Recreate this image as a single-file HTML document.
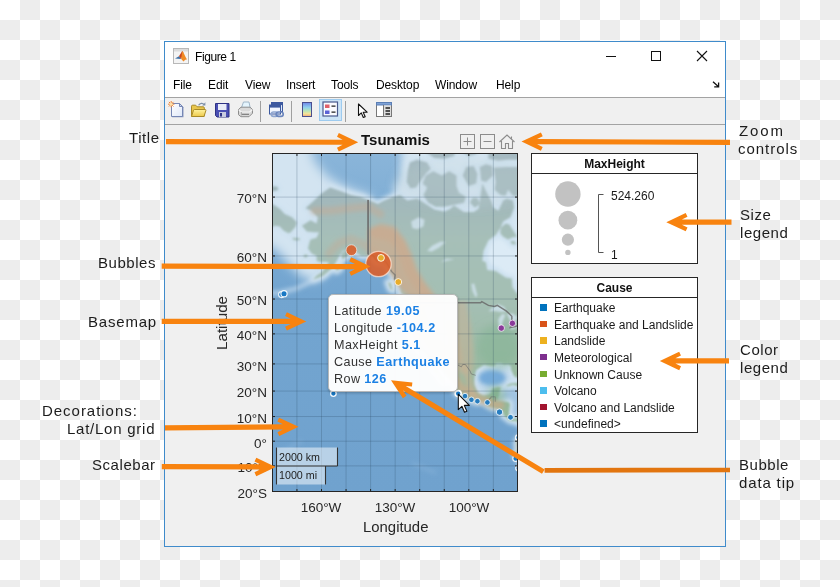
<!DOCTYPE html>
<html>
<head>
<meta charset="utf-8">
<title>Figure 1</title>
<style>
*{box-sizing:border-box;margin:0;padding:0}
html,body{width:840px;height:587px;overflow:hidden}
body{
  position:relative;
  font-family:"Liberation Sans",sans-serif;
  color:#222;
  background:conic-gradient(#ededed 25%,#fff 0 50%,#ededed 0 75%,#fff 0) 0 0/40px 40px;
}
.t{position:absolute;white-space:nowrap;line-height:1}
.t,.lab,.menu,.yt,.xt,.bt,.leg,.tip{will-change:transform}
#win{position:absolute;left:164px;top:41px;width:562px;height:506px;background:#f0f0f0;border:1px solid #3f8bcb}
#titlebar{position:absolute;left:165px;top:42px;width:560px;height:55px;background:#fff}
.hl{position:absolute;left:165px;width:560px;height:1px;background:#a3a3a3}
.menu{position:absolute;top:78px;letter-spacing:-.12px;font-size:12px;line-height:14px;color:#000;white-space:nowrap}
.lab{position:absolute;font-size:15px;line-height:18px;color:#1c1c1c;white-space:nowrap;letter-spacing:.55px}
.yt{position:absolute;width:60px;left:207px;text-align:right;font-size:13.5px;line-height:14px;color:#262626;white-space:nowrap}
.xt{position:absolute;width:60px;text-align:center;top:500.6px;font-size:13.5px;line-height:14px;color:#262626;white-space:nowrap}
.box{position:absolute;background:#fff;border:1px solid #262626}
.bt{position:absolute;font-weight:bold;font-size:12px;line-height:14px;color:#111;text-align:center;white-space:nowrap}
.leg{position:absolute;left:554px;font-size:12px;line-height:14px;color:#1a1a1a;white-space:nowrap}
.sq{position:absolute;left:540.2px;width:6.5px;height:6.5px}
.tip{position:absolute;left:334px;font-size:12.6px;line-height:15px;color:#333;white-space:nowrap;letter-spacing:.4px}
.tip b{color:#1b80e4;letter-spacing:.52px}
.sep{position:absolute;top:101px;width:1px;height:21px;background:#a0a0a0}
</style>
</head>
<body>

<!-- outside annotation labels -->
<div class="lab" style="left:129px;top:129px">Title</div>
<div class="lab" style="left:98px;top:254px">Bubbles</div>
<div class="lab" style="left:88px;top:312.5px;letter-spacing:.8px">Basemap</div>
<div class="lab" style="left:42px;top:402px;letter-spacing:.97px">Decorations:</div>
<div class="lab" style="left:67px;top:420px;letter-spacing:.75px">Lat/Lon grid</div>
<div class="lab" style="left:92px;top:456px">Scalebar</div>
<div class="lab" style="left:738.5px;top:122px;letter-spacing:1.9px">Zoom</div>
<div class="lab" style="left:738px;top:140px;letter-spacing:.96px">controls</div>
<div class="lab" style="left:740px;top:206px">Size</div>
<div class="lab" style="left:740px;top:224px">legend</div>
<div class="lab" style="left:740px;top:341px">Color</div>
<div class="lab" style="left:740px;top:359px">legend</div>
<div class="lab" style="left:739px;top:456px">Bubble</div>
<div class="lab" style="left:739px;top:474px;letter-spacing:.85px">data tip</div>

<!-- window chrome -->
<div id="win"></div>
<div id="titlebar"></div>
<div class="hl" style="top:97px"></div>
<div class="hl" style="top:124px"></div>
<div class="t" style="left:194.5px;top:50.3px;font-size:12px;line-height:14px;color:#000;letter-spacing:-.42px">Figure 1</div>
<div class="menu" style="left:173px">File</div>
<div class="menu" style="left:208px">Edit</div>
<div class="menu" style="left:245px">View</div>
<div class="menu" style="left:286px">Insert</div>
<div class="menu" style="left:331px">Tools</div>
<div class="menu" style="left:376px">Desktop</div>
<div class="menu" style="left:435px">Window</div>
<div class="menu" style="left:496px">Help</div>
<!-- caption buttons -->
<svg class="t" style="left:600px;top:41px" width="125" height="30" viewBox="0 0 125 30">
  <path d="M6 15.5h10" stroke="#111" stroke-width="1" fill="none"/>
  <rect x="51.5" y="10.5" width="9" height="9" stroke="#111" stroke-width="1" fill="none"/>
  <path d="M97 10l10 10M107 10l-10 10" stroke="#111" stroke-width="1.1" fill="none"/>
</svg>
<!-- dock arrow -->
<svg class="t" style="left:712px;top:81px" width="8" height="7" viewBox="0 0 8 7">
  <path d="M1 .8l5 4.4M6.6 1.6v4.2H2.2" stroke="#111" stroke-width="1.3" fill="none"/>
</svg>

<!-- title icon (matlab) -->
<svg class="t" style="left:173px;top:48px" width="16" height="16" viewBox="0 0 16 16">
  <rect x="0.5" y="0.5" width="15" height="15" fill="#f4f4f4" stroke="#b8b8b8"/>
  <rect x="1" y="1" width="14" height="2.5" fill="#dcdcdc"/>
  <path d="M2 10.5l4-2.2 2.2 2.6z" fill="#3b6ea5"/>
  <path d="M6 8.3l3.2-5.3 1.2 1.5-2.2 6.4z" fill="#c8441f"/>
  <path d="M9.2 3c1.6 1.6 3 5.6 4.8 8.6-1.6-.6-2.6.8-3.6 2-0.6-1.2-1.4-2-2.2-2.7z" fill="#f08a24"/>
</svg>
<!-- new -->
<svg class="t" style="left:168px;top:101px" width="17" height="17" viewBox="0 0 17 17">
  <defs><linearGradient id="pg" x1="0" y1="0" x2="1" y2="1"><stop offset="0" stop-color="#ffffff"/><stop offset="1" stop-color="#dfe8f8"/></linearGradient></defs>
  <path d="M4.2 3.2h8.3l3 3v10h-11.3z" fill="#8a97bd"/>
  <path d="M3.5 2.5h8l3 3v10h-11z" fill="url(#pg)" stroke="#7586b4" stroke-width="1"/>
  <path d="M11.5 2.5v3h3z" fill="#cfd9ee" stroke="#7586b4" stroke-width="1" stroke-linejoin="round"/>
  <path d="M3.2 0v6.4M0 3.2h6.4M.9.9l4.6 4.6M5.5.9L.9 5.5" stroke="#ee8436" stroke-width="1"/>
  <circle cx="3.2" cy="3.2" r="1.5" fill="#ffe0a8"/>
</svg>
<!-- open -->
<svg class="t" style="left:190px;top:101px" width="17" height="17" viewBox="0 0 17 17">
  <defs><linearGradient id="fg" x1="0" y1="0" x2="0" y2="1"><stop offset="0" stop-color="#fff3a0"/><stop offset="1" stop-color="#edc94a"/></linearGradient></defs>
  <path d="M1.5 5.2c0-.6.4-1 1-1h3.2l1.4 1.6h6.2c.6 0 1 .4 1 1v8.4h-12.8z" fill="#e9c64c" stroke="#a88a28"/>
  <path d="M1.5 15.5l2-6.3c.2-.5.5-.7 1-.7h10.700c.6 0 .9.400.7 1l-1.900 6z" fill="url(#fg)" stroke="#a88a28"/>
  <path d="M8.6 4.300c1.400-2.400 4.200-2.600 5.600-.7" fill="none" stroke="#7d8fa8" stroke-width="1.200"/>
  <path d="M15.400 1.300v3.300h-3.200z" fill="#7d8fa8"/>
</svg>
<!-- save -->
<svg class="t" style="left:214px;top:102px" width="17" height="16" viewBox="0 0 17 16">
  <path d="M1.5 1.5h13.5v13.5h-12l-1.5-1.5z" fill="#4a4fb3" stroke="#2e3284"/>
  <rect x="4" y="2" width="8.5" height="6" fill="#e9ecf8"/>
  <rect x="5" y="10" width="7" height="5" fill="#c9ccdf"/>
  <rect x="6" y="11" width="2" height="3.5" fill="#2e3284"/>
</svg>
<!-- print -->
<svg class="t" style="left:237px;top:101px" width="17" height="17" viewBox="0 0 17 17">
  <path d="M4.200 7.500l2.300-6.500h5.500l1.300 6.500z" fill="#e4f4fd" stroke="#9fb6c8"/>
  <path d="M1.500 8.500l2.500-2.300h9l2.500 2.300v3.700l-3.500 3.500h-8l-2.500-2z" fill="#d9d9d9" stroke="#8c8c8c"/>
  <path d="M1.800 9l2.600 2h8.200l2.700-2.300" fill="none" stroke="#f6f6f6" stroke-width="1.200"/>
  <path d="M4.500 13.300h7.500" stroke="#6e6e6e"/>
  <path d="M4.400 11v3.500" stroke="#a8a8a8"/>
</svg>
<div class="sep" style="left:260px"></div>
<!-- link / print preview -->
<svg class="t" style="left:267px;top:101px" width="18" height="17" viewBox="0 0 18 17">
  <rect x="4.500" y="1.500" width="11" height="9" fill="#dfe8fa" stroke="#3c599f"/>
  <rect x="4.500" y="1.500" width="11" height="2.600" fill="#3c599f"/>
  <rect x="2.500" y="4" width="11" height="9" fill="#f2f6ff" stroke="#3c599f"/>
  <rect x="2.500" y="4" width="11" height="2.600" fill="#3c599f"/>
  <rect x="4.300" y="11" width="6.500" height="4.400" rx="2.200" fill="none" stroke="#8fa6cf" stroke-width="1.700"/>
  <rect x="9.200" y="11" width="7" height="4.400" rx="2.200" fill="none" stroke="#6b86bd" stroke-width="1.700"/>
</svg>
<div class="sep" style="left:291px"></div>
<!-- colorbar -->
<svg class="t" style="left:301px;top:101px" width="12" height="17" viewBox="0 0 12 17">
  <defs><linearGradient id="cb" x1="0" y1="0" x2="0" y2="1">
    <stop offset="0" stop-color="#6f86e8"/><stop offset=".35" stop-color="#8fd0ee"/><stop offset=".6" stop-color="#b8e6b8"/><stop offset=".8" stop-color="#f4e49a"/><stop offset="1" stop-color="#f2a878"/></linearGradient></defs>
  <rect x="1.5" y="1.5" width="9" height="14" fill="url(#cb)" stroke="#4a4f8e"/>
</svg>
<!-- legend (active) -->
<div class="t" style="left:319px;top:99px;width:23px;height:22px;background:#cce4f7;border:1px solid #9dcbef"></div>
<svg class="t" style="left:322px;top:101px" width="17" height="17" viewBox="0 0 17 17">
  <rect x="1" y="1" width="14.5" height="14" fill="#fbfbff" stroke="#4a5a8e" stroke-width="1.2"/>
  <rect x="3" y="3.5" width="4.5" height="3.5" fill="#e0606a"/>
  <rect x="3" y="9.5" width="4.5" height="3.5" fill="#5b62d6"/>
  <path d="M9.5 5.2h4M9.5 11.2h4" stroke="#222" stroke-width="1.2"/>
</svg>
<div class="sep" style="left:345px"></div>
<!-- pointer -->
<svg class="t" style="left:357px;top:103px" width="12" height="16" viewBox="0 0 12 16">
  <path d="M1.5 1v11.5l2.8-2.6 2 4.6 1.9-.8-2-4.5h3.9z" fill="#fff" stroke="#111" stroke-width="1.1" stroke-linejoin="round"/>
</svg>
<!-- property panel -->
<svg class="t" style="left:375px;top:101px" width="18" height="17" viewBox="0 0 18 17">
  <rect x="1.5" y="1.5" width="15" height="14" fill="#fff" stroke="#777"/>
  <rect x="1.5" y="1.5" width="15" height="2.5" fill="#7ea2d6" stroke="#5b7fb6"/>
  <rect x="9" y="4.5" width="7" height="10.5" fill="#dcdcdc"/>
  <path d="M8.5 4v11.5" stroke="#777"/>
  <path d="M10.5 7h4.5M10.5 10h4.5M10.5 13h4.5" stroke="#222" stroke-width="1.3"/>
</svg>
<!-- figure -->
<div class="t" style="left:361px;top:132.4px;font-size:15px;line-height:16px;font-weight:bold;color:#111">Tsunamis</div>
<svg class="t" style="left:459px;top:133px" width="58" height="17" viewBox="0 0 58 17">
  <g fill="none" stroke="#8c8c8c" stroke-width="1">
   <rect x="1.5" y="1.5" width="14" height="14"/><path d="M4.5 8.5h8M8.5 4.5v8"/>
   <rect x="21.5" y="1.5" width="14" height="14"/><path d="M24.5 8.5h8"/>
   <path d="M40.5 9l7.5-7 7.5 7M42.5 8v7.5h4v-5h3v5h4V8M52.5 3.5v2" stroke-width="1.1"/>
  </g></svg>
<div class="yt" style="top:191.9px">70°N</div>
<div class="yt" style="top:251.0px">60°N</div>
<div class="yt" style="top:294.3px">50°N</div>
<div class="yt" style="top:329.4px">40°N</div>
<div class="yt" style="top:359.5px">30°N</div>
<div class="yt" style="top:386.0px">20°N</div>
<div class="yt" style="top:412.0px">10°N</div>
<div class="yt" style="top:437.0px">0°</div>
<div class="yt" style="top:461.2px">10°S</div>
<div class="yt" style="top:487.0px">20°S</div>
<div class="xt" style="left:290.8px">160°W</div>
<div class="xt" style="left:365.0px">130°W</div>
<div class="xt" style="left:439.4px">100°W</div>
<div class="t" style="left:362.8px;top:518.7px;font-size:14.9px;line-height:16px;color:#262626">Longitude</div>
<div class="t" style="left:222.1px;top:323.1px;font-size:15.2px;line-height:16px;color:#262626;transform:translate(-50%,-50%) rotate(-90deg)">Latitude</div>

<svg class="t" style="left:272px;top:153px" width="246" height="339" viewBox="0 0 246 339">
 <defs>
  <filter id="b1" x="-20%" y="-20%" width="140%" height="140%"><feGaussianBlur stdDeviation="1.0"/></filter>
  <filter id="b2" x="-20%" y="-20%" width="140%" height="140%"><feGaussianBlur stdDeviation="2.2"/></filter>
  <filter id="b3" x="-20%" y="-20%" width="140%" height="140%"><feGaussianBlur stdDeviation="4"/></filter>
  <filter id="b4" x="-30%" y="-30%" width="160%" height="160%"><feGaussianBlur stdDeviation="5.5"/></filter>
  <filter id="b5" x="-30%" y="-30%" width="160%" height="160%"><feGaussianBlur stdDeviation="7"/></filter>
  <linearGradient id="oc" x1="0" y1="0" x2="0" y2="1"><stop offset="0" stop-color="#8ab5d9"/><stop offset=".2" stop-color="#7dacd4"/><stop offset=".4" stop-color="#73a5d0"/><stop offset="1" stop-color="#70a2ce"/></linearGradient>
  <linearGradient id="lg" gradientUnits="userSpaceOnUse" x1="0" y1="0" x2="0" y2="339"><stop offset="0" stop-color="#a0b5bd"/><stop offset=".14" stop-color="#a2b8bb"/><stop offset=".25" stop-color="#a6bfb8"/><stop offset=".45" stop-color="#a4bfb3"/><stop offset=".6" stop-color="#9cbba6"/><stop offset=".8" stop-color="#93b898"/><stop offset="1" stop-color="#a0b494"/></linearGradient>
  <clipPath id="cl"><rect x="0" y="0" width="246" height="339"/></clipPath>
 </defs>
 <g clip-path="url(#cl)">
  <rect x="0" y="0" width="246" height="339" fill="url(#oc)"/>
  <!-- shelves -->
  <path d="M-36.4 -47.6 L27.4 -47.6 L42.1 7.7 L54.4 22.5 L69.1 32.1 L83.9 38.2 L98.6 42.7 L98.6 70.4 L49.5 103.0 L56.9 114.8 L42.1 128.8 L29.9 123.7 L17.6 112.5 L5.3 98.0 L-4.5 92.8 L-36.4 92.8 Z" fill="#d3e4f1" filter="url(#b4)"/>
  <g filter="url(#b3)" fill="#d3e4f1">
   <path d="M130.5 -17.3 L128.1 25.0 L120.7 36.7 L128.1 51.1 L196.8 70.4 L255.7 70.4 L255.7 -17.3 Z" fill="#d6e6f2"/>
   <path d="M209.1 70.4 L255.7 70.4 L255.7 142.2 L241.0 140.2 L221.4 121.5 L209.1 112.5 Z" fill="#dcebf6"/>
  </g>
  <g filter="url(#b2)">
   <path d="M29.9 72.8 L38.5 67.3 L44.6 70.4 L45.8 64.2 L39.7 57.8 L33.5 55.2 L42.1 47.6 L49.5 40.5 L58.1 34.5 L69.1 38.2 L79.0 41.9 L88.8 44.1 L96.1 46.9 L106.0 51.1 L110.9 48.3 L120.7 44.1 L128.1 41.9 L135.4 47.6 L145.2 45.5 L155.1 51.8 L162.4 56.5 L172.2 58.5 L177.2 56.5 L182.1 52.5 L191.9 59.1 L201.7 59.1 L206.6 55.8 L207.8 47.6 L210.3 30.6 L215.2 40.5 L218.9 47.6 L221.4 54.5 L226.3 57.8 L231.2 47.6 L234.9 45.5 L241.0 47.6 L242.2 54.5 L238.5 64.2 L231.2 68.6 L228.7 74.5 L223.8 82.0 L216.4 87.5 L211.5 98.0 L210.3 107.8 L214.0 109.2 L215.2 117.1 L223.8 118.0 L233.6 124.6 L239.8 125.4 L240.5 134.2 L244.7 140.2 L248.4 140.2 L249.6 136.2 L248.4 130.1 L255.7 121.5 L260.6 112.5 L270.5 112.5 L270.5 224.8 L245.9 224.2 L244.9 224.5 L243.0 224.0 L241.5 222.1 L239.0 216.5 L239.0 213.2 L236.1 210.9 L232.4 211.8 L228.7 209.8 L223.8 210.1 L222.6 213.2 L218.9 212.9 L212.0 211.8 L209.1 213.8 L204.2 217.1 L202.9 222.1 L202.2 227.5 L202.2 231.5 L203.7 235.5 L205.9 239.9 L209.1 241.7 L211.5 242.7 L216.4 241.7 L218.9 240.7 L220.1 236.0 L221.4 234.9 L226.3 233.9 L228.7 234.1 L227.5 239.4 L226.3 243.3 L225.0 247.1 L224.3 248.7 L227.5 248.7 L231.2 248.7 L236.1 248.9 L238.0 250.9 L237.3 256.0 L236.8 261.0 L238.5 263.5 L241.0 266.0 L245.9 265.5 L247.1 264.8 L253.3 267.3 L255.7 266.0 L260.6 261.0 L270.5 258.5 L270.5 338.3 L265.5 333.1 L255.7 322.9 L248.4 307.9 L243.4 301.7 L245.9 295.6 L244.7 290.7 L245.9 287.0 L249.6 284.5 L252.0 278.4 L252.0 271.0 L250.3 268.5 L245.9 270.2 L244.7 268.0 L241.0 268.0 L238.5 267.5 L236.8 267.0 L234.1 264.0 L231.7 263.0 L231.7 260.5 L228.7 257.3 L227.0 255.5 L223.8 255.0 L220.1 254.0 L215.9 252.2 L212.0 248.7 L209.6 247.9 L205.4 249.2 L200.5 247.6 L196.8 245.8 L192.4 243.8 L188.2 242.5 L184.5 239.6 L183.1 237.0 L183.8 234.1 L182.1 230.7 L179.6 227.5 L175.9 224.0 L173.7 222.1 L171.0 217.9 L168.6 215.2 L166.1 211.5 L164.4 207.5 L160.5 206.1 L160.7 209.5 L163.7 213.8 L166.1 217.9 L168.6 222.1 L171.0 226.1 L173.2 229.6 L172.2 230.4 L170.3 228.0 L167.3 225.3 L166.8 222.1 L162.9 219.3 L161.2 217.1 L161.9 215.2 L158.7 211.5 L156.8 208.1 L154.8 203.8 L151.9 199.9 L148.9 198.5 L146.2 197.6 L143.3 191.8 L141.6 188.1 L138.4 182.5 L137.1 179.6 L137.6 174.4 L136.7 171.1 L137.9 164.2 L137.9 158.9 L136.4 152.4 L140.3 152.4 L141.6 155.3 L141.8 149.8 L139.1 147.9 L135.4 144.1 L129.3 140.2 L128.1 134.2 L123.1 128.0 L121.9 123.7 L118.2 119.3 L114.6 112.5 L109.6 106.8 L106.0 110.2 L99.8 103.9 L94.9 103.0 L88.8 103.0 L83.9 99.0 L79.0 100.5 L75.3 103.0 L70.4 106.8 L69.1 100.5 L74.0 97.0 L70.4 98.0 L66.7 103.9 L64.2 108.7 L60.5 114.8 L55.6 119.3 L50.7 123.3 L45.8 125.0 L40.9 126.7 L44.6 122.4 L49.5 119.3 L54.4 113.4 L56.9 109.2 L53.2 108.7 L48.3 109.2 L44.6 107.8 L44.6 103.0 L39.7 100.5 L36.0 95.4 L37.2 90.2 L38.5 86.4 L44.6 84.8 L47.0 79.2 L42.1 79.2 L34.8 78.6 Z M-2.1 49.7 L2.9 52.5 L7.8 55.8 L12.7 61.0 L20.0 64.2 L24.9 69.2 L23.7 73.4 L18.8 79.2 L16.4 80.3 L11.4 77.5 L7.8 73.4 L2.9 72.8 L-2.1 75.1 Z M-2.1 32.9 L5.3 33.7 L6.5 36.7 L1.6 38.2 L-2.1 37.5 Z M20.8 84.8 L27.4 85.3 L27.9 87.0 L23.7 87.5 L20.8 86.4 Z M31.6 102.0 L35.3 101.5 L35.5 103.9 L32.3 104.4 Z M63.0 114.3 L67.9 111.6 L68.6 115.2 L64.7 118.0 Z M115.8 129.2 L119.0 130.1 L120.7 137.4 L118.2 135.8 Z M127.3 143.0 L134.2 145.3 L139.4 151.7 L135.9 151.7 L131.0 147.9 Z M134.7 29.0 L138.4 35.2 L144.0 34.5 L148.9 27.4 L153.8 20.8 L158.7 15.7 L155.1 9.5 L145.2 6.7 L137.9 9.5 L135.9 17.4 Z M151.4 41.9 L156.3 49.7 L163.7 53.8 L172.2 53.8 L182.1 51.8 L191.9 49.7 L193.9 44.1 L187.0 39.7 L184.5 32.9 L184.5 22.5 L177.2 18.3 L169.8 22.5 L161.2 18.3 L153.8 22.5 L150.6 30.6 L155.1 34.5 L153.1 39.0 Z M198.0 49.7 L202.9 54.5 L207.8 51.1 L205.4 44.8 L200.5 44.8 Z M190.7 22.5 L196.8 32.9 L204.2 30.6 L205.4 20.8 L201.7 13.1 L194.3 14.0 Z M207.8 14.0 L209.1 27.4 L214.0 29.0 L220.9 22.5 L220.1 13.1 L214.0 11.3 Z M155.1 0.1 L162.4 4.9 L172.2 5.8 L182.1 3.0 L184.5 -6.8 L155.1 -12.0 Z M187.0 -2.8 L196.8 3.0 L204.2 1.1 L204.2 -12.0 L187.0 -12.0 Z M216.4 -12.0 L216.4 5.8 L226.3 7.7 L236.1 6.7 L245.9 6.7 L248.4 -12.0 Z M221.4 14.8 L223.8 29.0 L222.6 36.7 L228.7 41.9 L233.6 42.7 L236.1 36.7 L241.0 42.7 L248.4 43.4 L255.7 51.1 L263.1 57.8 L263.1 70.4 L270.5 82.0 L275.4 12.2 L245.9 14.0 L233.6 14.0 Z M228.7 75.1 L233.6 70.4 L237.3 71.6 L243.4 80.9 L245.2 83.7 L241.0 84.2 L236.1 86.4 L231.2 83.7 L228.2 80.3 Z M238.5 88.0 L242.2 88.0 L244.7 91.2 L239.8 91.2 Z M233.6 233.1 L238.5 230.4 L244.7 229.9 L250.8 232.0 L253.3 236.8 L250.8 237.8 L248.4 234.1 L241.0 231.8 L236.1 233.3 Z" fill="none" stroke="#cfe2f0" stroke-width="7" stroke-linejoin="round"/>
   <path d="M40.9 127.1 L32.3 131.7 L24.9 135.4 L15.1 137.8 L7.8 139.4 L-2.1 140.2" fill="none" stroke="#c4dbed" stroke-width="4" stroke-opacity=".8"/>
   <path d="M201.7 209.5 L243.4 209.5 L245.9 227.5 L231.2 232.8 L221.4 232.8 L218.9 242.0 L209.1 243.3 L201.7 235.5 Z" fill="#cde1f0" fill-opacity=".85"/>
   <path d="M223.8 232.8 L250.8 227.5 L255.7 240.7 L248.4 266.0 L236.1 266.0 L236.1 250.9 L223.8 248.4 Z" fill="#c9dff0" fill-opacity=".55"/>
  </g>
  <ellipse cx="220.1" cy="224.8" rx="13.5" ry="8" fill="#6fa6d8" fill-opacity=".92" filter="url(#b2)"/>
  <!-- land -->
  <path d="M29.9 72.8 L38.5 67.3 L44.6 70.4 L45.8 64.2 L39.7 57.8 L33.5 55.2 L42.1 47.6 L49.5 40.5 L58.1 34.5 L69.1 38.2 L79.0 41.9 L88.8 44.1 L96.1 46.9 L106.0 51.1 L110.9 48.3 L120.7 44.1 L128.1 41.9 L135.4 47.6 L145.2 45.5 L155.1 51.8 L162.4 56.5 L172.2 58.5 L177.2 56.5 L182.1 52.5 L191.9 59.1 L201.7 59.1 L206.6 55.8 L207.8 47.6 L210.3 30.6 L215.2 40.5 L218.9 47.6 L221.4 54.5 L226.3 57.8 L231.2 47.6 L234.9 45.5 L241.0 47.6 L242.2 54.5 L238.5 64.2 L231.2 68.6 L228.7 74.5 L223.8 82.0 L216.4 87.5 L211.5 98.0 L210.3 107.8 L214.0 109.2 L215.2 117.1 L223.8 118.0 L233.6 124.6 L239.8 125.4 L240.5 134.2 L244.7 140.2 L248.4 140.2 L249.6 136.2 L248.4 130.1 L255.7 121.5 L260.6 112.5 L270.5 112.5 L270.5 224.8 L245.9 224.2 L244.9 224.5 L243.0 224.0 L241.5 222.1 L239.0 216.5 L239.0 213.2 L236.1 210.9 L232.4 211.8 L228.7 209.8 L223.8 210.1 L222.6 213.2 L218.9 212.9 L212.0 211.8 L209.1 213.8 L204.2 217.1 L202.9 222.1 L202.2 227.5 L202.2 231.5 L203.7 235.5 L205.9 239.9 L209.1 241.7 L211.5 242.7 L216.4 241.7 L218.9 240.7 L220.1 236.0 L221.4 234.9 L226.3 233.9 L228.7 234.1 L227.5 239.4 L226.3 243.3 L225.0 247.1 L224.3 248.7 L227.5 248.7 L231.2 248.7 L236.1 248.9 L238.0 250.9 L237.3 256.0 L236.8 261.0 L238.5 263.5 L241.0 266.0 L245.9 265.5 L247.1 264.8 L253.3 267.3 L255.7 266.0 L260.6 261.0 L270.5 258.5 L270.5 338.3 L265.5 333.1 L255.7 322.9 L248.4 307.9 L243.4 301.7 L245.9 295.6 L244.7 290.7 L245.9 287.0 L249.6 284.5 L252.0 278.4 L252.0 271.0 L250.3 268.5 L245.9 270.2 L244.7 268.0 L241.0 268.0 L238.5 267.5 L236.8 267.0 L234.1 264.0 L231.7 263.0 L231.7 260.5 L228.7 257.3 L227.0 255.5 L223.8 255.0 L220.1 254.0 L215.9 252.2 L212.0 248.7 L209.6 247.9 L205.4 249.2 L200.5 247.6 L196.8 245.8 L192.4 243.8 L188.2 242.5 L184.5 239.6 L183.1 237.0 L183.8 234.1 L182.1 230.7 L179.6 227.5 L175.9 224.0 L173.7 222.1 L171.0 217.9 L168.6 215.2 L166.1 211.5 L164.4 207.5 L160.5 206.1 L160.7 209.5 L163.7 213.8 L166.1 217.9 L168.6 222.1 L171.0 226.1 L173.2 229.6 L172.2 230.4 L170.3 228.0 L167.3 225.3 L166.8 222.1 L162.9 219.3 L161.2 217.1 L161.9 215.2 L158.7 211.5 L156.8 208.1 L154.8 203.8 L151.9 199.9 L148.9 198.5 L146.2 197.6 L143.3 191.8 L141.6 188.1 L138.4 182.5 L137.1 179.6 L137.6 174.4 L136.7 171.1 L137.9 164.2 L137.9 158.9 L136.4 152.4 L140.3 152.4 L141.6 155.3 L141.8 149.8 L139.1 147.9 L135.4 144.1 L129.3 140.2 L128.1 134.2 L123.1 128.0 L121.9 123.7 L118.2 119.3 L114.6 112.5 L109.6 106.8 L106.0 110.2 L99.8 103.9 L94.9 103.0 L88.8 103.0 L83.9 99.0 L79.0 100.5 L75.3 103.0 L70.4 106.8 L69.1 100.5 L74.0 97.0 L70.4 98.0 L66.7 103.9 L64.2 108.7 L60.5 114.8 L55.6 119.3 L50.7 123.3 L45.8 125.0 L40.9 126.7 L44.6 122.4 L49.5 119.3 L54.4 113.4 L56.9 109.2 L53.2 108.7 L48.3 109.2 L44.6 107.8 L44.6 103.0 L39.7 100.5 L36.0 95.4 L37.2 90.2 L38.5 86.4 L44.6 84.8 L47.0 79.2 L42.1 79.2 L34.8 78.6 Z M-2.1 49.7 L2.9 52.5 L7.8 55.8 L12.7 61.0 L20.0 64.2 L24.9 69.2 L23.7 73.4 L18.8 79.2 L16.4 80.3 L11.4 77.5 L7.8 73.4 L2.9 72.8 L-2.1 75.1 Z M-2.1 32.9 L5.3 33.7 L6.5 36.7 L1.6 38.2 L-2.1 37.5 Z M20.8 84.8 L27.4 85.3 L27.9 87.0 L23.7 87.5 L20.8 86.4 Z M31.6 102.0 L35.3 101.5 L35.5 103.9 L32.3 104.4 Z M63.0 114.3 L67.9 111.6 L68.6 115.2 L64.7 118.0 Z M115.8 129.2 L119.0 130.1 L120.7 137.4 L118.2 135.8 Z M127.3 143.0 L134.2 145.3 L139.4 151.7 L135.9 151.7 L131.0 147.9 Z M134.7 29.0 L138.4 35.2 L144.0 34.5 L148.9 27.4 L153.8 20.8 L158.7 15.7 L155.1 9.5 L145.2 6.7 L137.9 9.5 L135.9 17.4 Z M151.4 41.9 L156.3 49.7 L163.7 53.8 L172.2 53.8 L182.1 51.8 L191.9 49.7 L193.9 44.1 L187.0 39.7 L184.5 32.9 L184.5 22.5 L177.2 18.3 L169.8 22.5 L161.2 18.3 L153.8 22.5 L150.6 30.6 L155.1 34.5 L153.1 39.0 Z M198.0 49.7 L202.9 54.5 L207.8 51.1 L205.4 44.8 L200.5 44.8 Z M190.7 22.5 L196.8 32.9 L204.2 30.6 L205.4 20.8 L201.7 13.1 L194.3 14.0 Z M207.8 14.0 L209.1 27.4 L214.0 29.0 L220.9 22.5 L220.1 13.1 L214.0 11.3 Z M155.1 0.1 L162.4 4.9 L172.2 5.8 L182.1 3.0 L184.5 -6.8 L155.1 -12.0 Z M187.0 -2.8 L196.8 3.0 L204.2 1.1 L204.2 -12.0 L187.0 -12.0 Z M216.4 -12.0 L216.4 5.8 L226.3 7.7 L236.1 6.7 L245.9 6.7 L248.4 -12.0 Z M221.4 14.8 L223.8 29.0 L222.6 36.7 L228.7 41.9 L233.6 42.7 L236.1 36.7 L241.0 42.7 L248.4 43.4 L255.7 51.1 L263.1 57.8 L263.1 70.4 L270.5 82.0 L275.4 12.2 L245.9 14.0 L233.6 14.0 Z M228.7 75.1 L233.6 70.4 L237.3 71.6 L243.4 80.9 L245.2 83.7 L241.0 84.2 L236.1 86.4 L231.2 83.7 L228.2 80.3 Z M238.5 88.0 L242.2 88.0 L244.7 91.2 L239.8 91.2 Z M233.6 233.1 L238.5 230.4 L244.7 229.9 L250.8 232.0 L253.3 236.8 L250.8 237.8 L248.4 234.1 L241.0 231.8 L236.1 233.3 Z" fill="url(#lg)" filter="url(#b1)"/>
  <g clip-path="url(#cl)">
  <!-- regional tints -->
  <g filter="url(#b3)">
   <ellipse cx="196.8" cy="29.0" rx="75" ry="26" fill="#b4c6cf" fill-opacity=".2"/>
   <ellipse cx="226.3" cy="193.4" rx="22" ry="22" fill="#86b495" fill-opacity=".6"/>
   <ellipse cx="223.8" cy="243.3" rx="9" ry="10" fill="#79ad8a" fill-opacity=".7"/>
  </g>
  </g>
  <!-- mountains -->
  <g filter="url(#b2)" fill="none" stroke-linecap="round" stroke-linejoin="round">
   <path d="M42.1 57.8 L59.3 57.8 L79.0 55.2 L96.1 53.8 L108.4 61.0" stroke="#c6ab93" stroke-width="8" stroke-opacity=".5"/>
   <path d="M56.9 100.5 L66.7 90.2 L79.0 85.9 L91.2 91.2 L98.6 98.0 L108.4 103.9 L118.2 114.8 L125.6 125.8 L133.0 138.2 L141.6 146.0" stroke="#c9a78d" stroke-width="8" stroke-opacity=".36"/>
   <path d="M103.5 79.2 L118.2 82.0 L128.1 90.2 L133.0 103.0 L137.9 117.1 L147.7 132.1 L157.5 144.1 L164.9 157.2 L172.2 167.7 L179.6 180.9 L182.1 193.4 L184.5 205.2" stroke="#cda88b" stroke-width="12" stroke-opacity=".45"/>
   <path d="M177.2 149.8 L194.3 147.9 L199.3 174.4 L201.7 196.4 L201.7 216.5 L194.3 222.1 L177.2 216.5 Z" fill="#cbb294" fill-opacity=".5" stroke="none"/>
   <path d="M96.1 76.3 L108.4 70.4 L123.1 73.4 L133.0 87.5 L140.3 103.0 L145.2 117.1 L152.6 130.1 L160.0 140.2 L164.9 149.8 L157.5 153.5 L147.7 149.8 L140.3 144.1 L130.5 136.2 L123.1 125.8 L115.8 114.8 L108.4 105.4 L98.6 100.5 L96.1 92.8 Z" fill="#cfa98b" fill-opacity=".7" stroke="none"/>
   <path d="M145.2 149.8 L150.2 167.7 L155.1 180.9 L162.4 190.3 L169.8 199.4" stroke="#cbae90" stroke-width="15" stroke-opacity=".7"/>
   <path d="M175.9 210.9 L180.8 219.3 L184.5 227.5 L188.2 234.1 L196.8 239.9 L202.9 243.3 L206.6 245.8 L215.2 248.4 L220.1 250.9 L228.7 252.2" stroke="#c8ac8c" stroke-width="8" stroke-opacity=".8"/>
   <path d="M191.9 213.8 L195.6 223.4 L198.0 231.5 L201.0 239.4" stroke="#cab092" stroke-width="7" stroke-opacity=".6"/>
   <path d="M249.6 285.7 L249.6 298.0 L253.3 310.4 L260.6 322.9 L268.0 330.6" stroke="#c9ab88" stroke-width="8" stroke-opacity=".7"/>
  </g>
  <path d="M139.1 68.6 L146.5 64.2 L152.6 66.7 L151.4 73.4 L145.2 76.3 L140.3 75.1 Z M155.1 98.0 L160.0 92.8 L168.6 88.6 L173.5 89.1 L167.3 94.4 L160.0 98.5 Z M168.6 109.2 L174.7 105.4 L182.1 106.4 L174.7 107.8 Z M199.3 130.9 L202.2 130.5 L205.4 142.2 L203.7 144.5 L200.5 138.2 Z M216.4 158.2 L221.4 153.9 L226.3 151.3 L232.4 153.9 L234.6 158.6 L228.7 158.9 L222.6 157.9 Z M226.8 174.4 L226.3 166.0 L229.9 161.1 L233.6 161.4 L230.4 169.4 L229.9 175.0 Z M234.9 160.7 L241.0 160.4 L245.9 164.2 L244.7 166.0 L241.7 170.4 L239.8 170.7 L237.3 166.0 Z M237.6 175.4 L243.4 172.4 L248.6 171.4 L245.9 174.1 L239.8 176.4 Z" fill="#d4e6f3" fill-opacity=".75" filter="url(#b1)"/>
  <ellipse cx="201.7" cy="20.8" rx="70" ry="30" fill="#e4eef6" fill-opacity=".08" filter="url(#b5)"/>
  <!-- borders -->
  <g fill="none" stroke="#6b6b6b" stroke-width="1" stroke-opacity=".75">
   <path d="M96.1 46.9 L96.1 101.5" stroke-width="1.9" stroke="#686868" stroke-opacity=".85"/>
   <path d="M96.1 101.5 L101.1 102.5 L104.7 107.8 L109.6 104.4 L114.6 109.7 L119.5 118.4 L123.1 121.9 L122.4 126.7" stroke-opacity=".6" stroke-width="1.4"/>
   <path d="M139.8 149.8 L208.6 149.8 L209.8 148.7 L216.4 152.4 L222.6 153.5 L225.3 152.4 L234.1 157.9 L237.3 160.7 L239.8 163.2 L240.0 171.1 L238.3 174.4 L243.4 173.4 L248.4 171.7 L248.4 169.4" stroke-width="1.5" stroke="#676767" stroke-opacity=".8"/>
   <path d="M154.8 203.8 L160.5 203.5 L169.8 207.2 L176.7 206.9 L176.7 205.8 L180.8 205.8 L185.8 212.1 L189.4 213.8 L190.7 211.5 L193.4 211.5 L198.0 217.9 L199.3 221.0 L203.7 222.3" stroke-opacity=".6"/>
   <path d="M215.9 252.0 L217.7 245.3 L218.9 245.3 L218.9 243.8 L223.3 243.8 L223.3 248.7" stroke-opacity=".5"/>
  </g>
  <!-- faint ocean swirls -->
  <g filter="url(#b2)" stroke="#8bb4da" stroke-opacity=".55" fill="none" stroke-width="3">
   <path d="M8 300l22 -12"/><path d="M60 205l30 14"/><path d="M140 310l24 10"/>
  </g>
  <!-- grid -->
  <path d="M24.95 0V339 M49.50 0V339 M74.05 0V339 M98.60 0V339 M123.15 0V339 M147.70 0V339 M172.25 0V339 M196.80 0V339 M221.35 0V339 M0 312.88H246 M0 288.20H246 M0 263.52H246 M0 238.07H246 M0 210.93H246 M0 180.89H246 M0 146.04H246 M0 102.96H246 M0 44.09H246" stroke="#2a4660" stroke-opacity=".24" stroke-width="1" fill="none"/>
  <!-- scalebar -->
  <rect x="4.5" y="294.5" width="61" height="18.5" fill="#fff" fill-opacity=".5"/>
  <rect x="4.5" y="313" width="49" height="18.5" fill="#fff" fill-opacity=".5"/>
  <path d="M4.5 294.5V331.5 M4.5 313H65.5 M65.5 294.5V313 M53.5 313V331.5" stroke="#333" stroke-width="1.1" fill="none"/>
  <!-- bubbles -->
  <circle cx="79.4" cy="97.2" r="5.4" fill="#d95f2b" fill-opacity="0.9" stroke="#fff" stroke-opacity="0.7" stroke-width="0.8"/><circle cx="106.5" cy="111.0" r="12.7" fill="#d95f2b" fill-opacity="0.9" stroke="#fde3d3" stroke-opacity="0.75" stroke-width="1.3"/><circle cx="109.0" cy="104.9" r="3.4" fill="#e8ac2a" fill-opacity="1" stroke="#fff" stroke-opacity="0.9" stroke-width="1"/><circle cx="126.3" cy="129.0" r="3.4" fill="#e8ac2a" fill-opacity="1" stroke="#fff" stroke-opacity="0.8" stroke-width="1"/><circle cx="9.6" cy="141.6" r="3.0" fill="#1878c4" fill-opacity="1" stroke="#fff" stroke-opacity="0.9" stroke-width="1.1"/><circle cx="12.0" cy="140.7" r="3.1" fill="#1878c4" fill-opacity="1" stroke="#fff" stroke-opacity="0.95" stroke-width="1.1"/><circle cx="61.4" cy="240.6" r="2.8" fill="#1878c4" fill-opacity="1" stroke="#fff" stroke-opacity="0.95" stroke-width="1.3"/><circle cx="229.3" cy="175.1" r="3.2" fill="#8a3a9a" fill-opacity="1" stroke="#fff" stroke-opacity="0.8" stroke-width="0.9"/><circle cx="240.4" cy="170.3" r="3.2" fill="#8a3a9a" fill-opacity="1" stroke="#fff" stroke-opacity="0.8" stroke-width="0.9"/><circle cx="193.0" cy="243.1" r="2.8" fill="#2079bf" fill-opacity="0.95" stroke="#fff" stroke-opacity="0.8" stroke-width="1.0"/><circle cx="199.4" cy="246.8" r="2.8" fill="#2079bf" fill-opacity="0.95" stroke="#fff" stroke-opacity="0.8" stroke-width="1.0"/><circle cx="205.4" cy="248.2" r="2.8" fill="#2079bf" fill-opacity="0.95" stroke="#fff" stroke-opacity="0.8" stroke-width="1.0"/><circle cx="215.4" cy="249.4" r="2.8" fill="#2079bf" fill-opacity="0.95" stroke="#fff" stroke-opacity="0.8" stroke-width="1.0"/><circle cx="227.5" cy="259.1" r="3.2" fill="#2079bf" fill-opacity="0.95" stroke="#fff" stroke-opacity="0.8" stroke-width="1.0"/><circle cx="238.5" cy="264.3" r="2.9" fill="#2079bf" fill-opacity="0.95" stroke="#fff" stroke-opacity="0.8" stroke-width="1.0"/><circle cx="246.2" cy="284.6" r="2.6" fill="#1878c4" fill-opacity="1" stroke="#fff" stroke-opacity="0.9" stroke-width="1.4"/><circle cx="243.6" cy="305.6" r="2.8" fill="#1878c4" fill-opacity="1" stroke="#fff" stroke-opacity="0.9" stroke-width="1.2"/><circle cx="246.4" cy="315.2" r="2.6" fill="#1878c4" fill-opacity="1" stroke="#fff" stroke-opacity="0.9" stroke-width="1.4"/><circle cx="186.2" cy="240.6" r="3.0" fill="#1878c4" fill-opacity="1" stroke="#fff" stroke-opacity="1" stroke-width="1.6"/>
 </g>
 <path d="M24.95 339v-3 M24.95 0v3 M49.50 339v-3 M49.50 0v3 M74.05 339v-3 M74.05 0v3 M98.60 339v-3 M98.60 0v3 M123.15 339v-3 M123.15 0v3 M147.70 339v-3 M147.70 0v3 M172.25 339v-3 M172.25 0v3 M196.80 339v-3 M196.80 0v3 M221.35 339v-3 M221.35 0v3 M0 312.88h3 M246 312.88h-3 M0 288.20h3 M246 288.20h-3 M0 263.52h3 M246 263.52h-3 M0 238.07h3 M246 238.07h-3 M0 210.93h3 M246 210.93h-3 M0 180.89h3 M246 180.89h-3 M0 146.04h3 M246 146.04h-3 M0 102.96h3 M246 102.96h-3 M0 44.09h3 M246 44.09h-3" stroke="#222" stroke-width="1" fill="none"/>
 <rect x="0.5" y="0.5" width="245" height="338" fill="none" stroke="#262626" stroke-width="1"/>
</svg>
<div class="t" style="left:279px;top:451.8px;font-size:10.7px;color:#222">2000 km</div>
<div class="t" style="left:279px;top:470.3px;font-size:10.7px;color:#222">1000 mi</div>

<div class="box" style="left:531px;top:153px;width:167px;height:111px"></div>
<div class="t" style="left:532px;top:172.5px;width:165px;height:1.4px;background:#262626"></div>
<div class="bt" style="left:532px;top:157px;width:165px">MaxHeight</div>
<svg class="t" style="left:532px;top:174px" width="165" height="88" viewBox="0 0 165 88">
  <g fill="#c2c2c2"><circle cx="35.9" cy="20" r="12.7"/><circle cx="35.9" cy="46.2" r="9.4"/><circle cx="35.9" cy="65.7" r="6.1"/><circle cx="35.9" cy="78.4" r="2.7"/></g>
  <path d="M71.5 20.5H66.5V78.5H71.5" fill="none" stroke="#555" stroke-width="1"/>
</svg>
<div class="t" style="left:610.5px;top:188.5px;font-size:12px;line-height:14px;color:#1a1a1a">524.260</div>
<div class="t" style="left:610.5px;top:247.5px;font-size:12px;line-height:14px;color:#1a1a1a">1</div>
<div class="box" style="left:531px;top:277px;width:167px;height:156px"></div>
<div class="t" style="left:532px;top:297px;width:165px;height:1.4px;background:#262626"></div>
<div class="bt" style="left:532px;top:280.8px;width:165px">Cause</div>
<div class="sq" style="top:304.3px;background:#0072bd"></div><div class="leg" style="top:301.3px">Earthquake</div>
<div class="sq" style="top:320.9px;background:#d95319"></div><div class="leg" style="top:317.9px">Earthquake and Landslide</div>
<div class="sq" style="top:337.4px;background:#edb120"></div><div class="leg" style="top:334.4px">Landslide</div>
<div class="sq" style="top:353.9px;background:#7e2f8e"></div><div class="leg" style="top:350.9px">Meteorological</div>
<div class="sq" style="top:370.5px;background:#77ac30"></div><div class="leg" style="top:367.5px">Unknown Cause</div>
<div class="sq" style="top:387.1px;background:#4dbeee"></div><div class="leg" style="top:384.1px">Volcano</div>
<div class="sq" style="top:403.6px;background:#a2142f"></div><div class="leg" style="top:400.6px">Volcano and Landslide</div>
<div class="sq" style="top:420.2px;background:#0072bd"></div><div class="leg" style="top:417.2px">&lt;undefined&gt;</div>
<div class="t" style="left:328px;top:294px;width:129.5px;height:97.6px;background:#fff;border:1px solid #b9b9b9;border-radius:5px;box-shadow:0 1px 3px rgba(0,0,0,.25);opacity:.97"></div>
<div class="tip" style="top:304px">Latitude <b>19.05</b></div>
<div class="tip" style="top:321px">Longitude <b>-104.2</b></div>
<div class="tip" style="top:338px">MaxHeight <b>5.1</b></div>
<div class="tip" style="top:355px">Cause <b>Earthquake</b></div>
<div class="tip" style="top:372px">Row <b>126</b></div><svg class="t" style="left:0;top:0;pointer-events:none" width="840" height="587" viewBox="0 0 840 587"><path d="M458.3 394.2v15.4l3.6-3.3 2.6 6 2.4-1-2.6-5.9h5z" fill="#fff" stroke="#111" stroke-width="1.1" stroke-linejoin="round"/>
<path d="M0 0L-19.4 -9.2L-21.2 -5.4L-15.6 -2.6L-192.2 -2.6L-192.2 2.6L-15.6 2.6L-21.2 5.4L-19.4 9.2Z" fill="#f8830f" transform="translate(358.2 142.3) rotate(0.18)"/>
<path d="M0 0L-19.4 -9.2L-21.2 -5.4L-15.6 -2.6L-208.8 -2.6L-208.8 2.6L-15.6 2.6L-21.2 5.4L-19.4 9.2Z" fill="#f8830f" transform="translate(370.5 266.6) rotate(0.14)"/>
<path d="M0 0L-19.4 -9.2L-21.2 -5.4L-15.6 -2.6L-144.6 -2.6L-144.6 2.6L-15.6 2.6L-21.2 5.4L-19.4 9.2Z" fill="#f8830f" transform="translate(306.3 321.4) rotate(0.00)"/>
<path d="M0 0L-19.4 -9.2L-21.2 -5.4L-15.6 -2.6L-133.6 -2.6L-133.6 2.6L-15.6 2.6L-21.2 5.4L-19.4 9.2Z" fill="#f8830f" transform="translate(298.6 426.7) rotate(-0.47)"/>
<path d="M0 0L-19.4 -9.2L-21.2 -5.4L-15.6 -2.6L-113.9 -2.6L-113.9 2.6L-15.6 2.6L-21.2 5.4L-19.4 9.2Z" fill="#f8830f" transform="translate(275.7 467.0) rotate(0.20)"/>
<path d="M0 0L-19.4 -9.2L-21.2 -5.4L-15.6 -2.6L-208.5 -2.6L-208.5 2.6L-15.6 2.6L-21.2 5.4L-19.4 9.2Z" fill="#f8830f" transform="translate(521.5 141.6) rotate(-179.81)"/>
<path d="M0 0L-19.4 -9.2L-21.2 -5.4L-15.6 -2.6L-65.2 -2.6L-65.2 2.6L-15.6 2.6L-21.2 5.4L-19.4 9.2Z" fill="#f8830f" transform="translate(666.3 222.2) rotate(179.91)"/>
<path d="M0 0L-19.4 -9.2L-21.2 -5.4L-15.6 -2.6L-69.2 -2.6L-69.2 2.6L-15.6 2.6L-21.2 5.4L-19.4 9.2Z" fill="#f8830f" transform="translate(659.8 361.0) rotate(179.83)"/>
<path d="M730 470L544.6 470.4" stroke="#e2750f" stroke-width="4.7" fill="none" stroke-linecap="butt"/>
<path d="M0 0L-19.4 -9.2L-21.2 -5.4L-15.6 -2.6L-177.6 -2.6L-177.6 2.6L-15.6 2.6L-21.2 5.4L-19.4 9.2Z" fill="#f8830f" transform="translate(391.0 380.3) rotate(-149.06)"/></svg>
</body>
</html>
